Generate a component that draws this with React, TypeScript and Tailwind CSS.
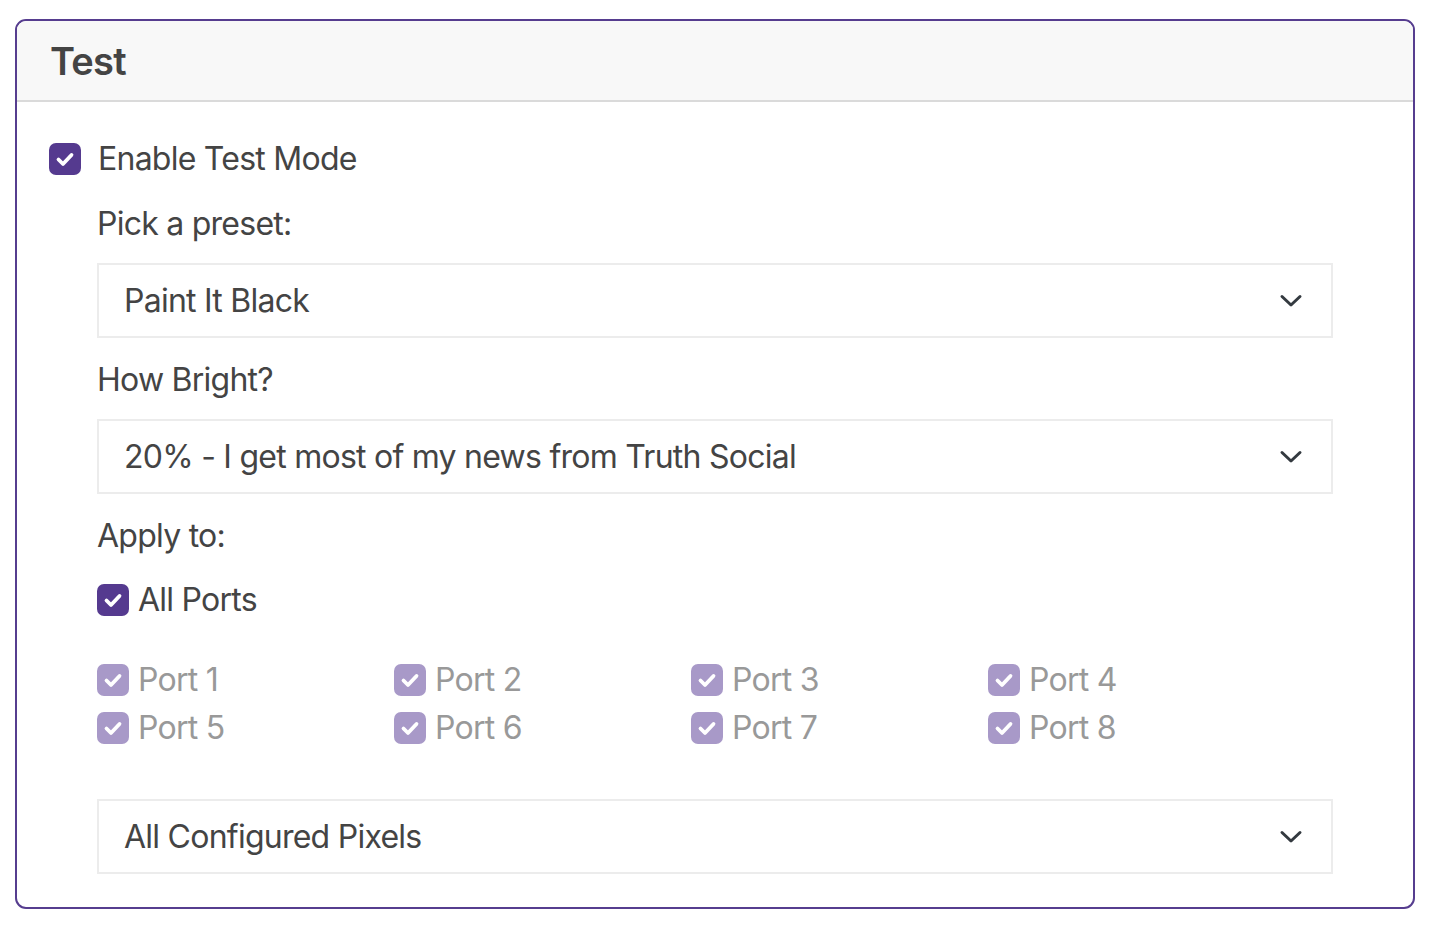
import React from "react";

const font = { fontFamily: "Inter, 'Liberation Sans', sans-serif" };

function Check({ disabled }: { disabled?: boolean }) {
  return (
    <span
      className={`flex h-[32px] w-[32px] shrink-0 items-center justify-center rounded-[7px] ${
        disabled ? "bg-[#a899c8]" : "bg-[#553a8f]"
      }`}
    >
      <svg width="32" height="32" viewBox="0 0 32 32" fill="none">
        <path d="M9.5 16.5 L14 21 L22.5 12" stroke="white" strokeWidth="3.8" strokeLinecap="round" strokeLinejoin="round" />
      </svg>
    </span>
  );
}

function Select({ value }: { value: string }) {
  return (
    <div className="flex h-[75px] w-[1236px] items-center justify-between border-2 border-[#ececec] bg-white pl-[25px] pr-[28px]">
      <span className="text-[32px] tracking-[-0.75px] text-[#444]">{value}</span>
      <svg width="24" height="16" viewBox="0 0 24 16" fill="none">
        <path d="M3 3.5 L12 12 L21 3.5" stroke="#343a40" strokeWidth="3" strokeLinecap="round" strokeLinejoin="round" />
      </svg>
    </div>
  );
}

export default function App() {
  const ports = [1, 2, 3, 4, 5, 6, 7, 8];
  return (
    <div className="min-h-[928px] bg-white pl-[15px] pt-[19px]" style={font}>
      <div className="h-[890px] w-[1400px] overflow-hidden rounded-[11px] border-2 border-[#563d8f]">
        <div className="flex h-[81px] items-center border-b-2 border-[#dadada] bg-[#f8f8f8] pl-[33px]">
          <h1 className="text-[38px] font-semibold leading-none tracking-[-0.75px] text-[#444]">Test</h1>
        </div>
        <div className="pl-[32px] pt-[41px] text-[#444] tracking-[-0.75px]">
          <label className="flex h-[32px] items-center gap-[17px]">
            <Check />
            <span className="text-[32px] leading-none">Enable Test Mode</span>
          </label>
          <div className="pl-[48px]">
            <div className="mt-[25px] text-[32px] leading-[48px]">Pick a preset:</div>
            <div className="mt-[15px]">
              <Select value="Paint It Black" />
            </div>
            <div className="mt-[18px] text-[32px] leading-[48px]">How Bright?</div>
            <div className="mt-[15px]">
              <Select value="20% - I get most of my news from Truth Social" />
            </div>
            <div className="mt-[18px] text-[32px] leading-[48px]">Apply to:</div>
            <label className="mt-[24px] flex h-[32px] items-center gap-[9px]">
              <Check />
              <span className="text-[32px] leading-none">All Ports</span>
            </label>
            <div className="mt-[40px] grid w-[1188px] grid-cols-4">
              {ports.map((p) => (
                <div key={p} className="flex h-[48px] items-center gap-[9px]">
                  <Check disabled />
                  <span className="text-[32px] leading-none text-[#999]">Port {p}</span>
                </div>
              ))}
            </div>
            <div className="mt-[47px]">
              <Select value="All Configured Pixels" />
            </div>
          </div>
        </div>
      </div>
    </div>
  );
}
